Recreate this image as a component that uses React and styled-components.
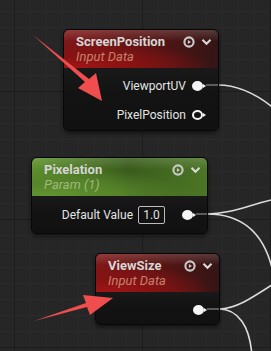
import React from "react";
import styled, { createGlobalStyle } from "styled-components";

const GlobalStyle = createGlobalStyle`
  html, body {
    margin: 0;
    padding: 0;
    background: #262626;
    font-family: Roboto, "Liberation Sans", sans-serif;
  }
`;

const Canvas = styled.div`
  position: relative;
  width: 271px;
  height: 351px;
  overflow: hidden;
  background-color: #262626;
  background-image:
    linear-gradient(to right, #1c1c1c 1px, transparent 1px),
    linear-gradient(to bottom, #1c1c1c 1px, transparent 1px),
    linear-gradient(to right, #2a2a2a 1px, transparent 1px),
    linear-gradient(to bottom, #2a2a2a 1px, transparent 1px);
  background-size: 128px 128px, 128px 128px, 16px 16px, 16px 16px;
  background-position: 14px 91px, 14px 91px, 14px 11px, 14px 11px;
`;

const headers = {
  red: `
    linear-gradient(180deg, rgba(255,255,255,0.16) 0%, rgba(255,255,255,0) 30%),
    radial-gradient(ellipse 85% 75% at 10% 100%, #a01616 0%, #861212 45%, rgba(100,16,16,0) 100%),
    linear-gradient(90deg, #801818 0%, #561414 55%, #341515 100%)
  `,
  green: `
    linear-gradient(180deg, rgba(255,255,255,0.14) 0%, rgba(255,255,255,0) 30%),
    radial-gradient(ellipse 85% 75% at 10% 100%, #629430 0%, #56842a 45%, rgba(60,90,28,0) 100%),
    linear-gradient(90deg, #5e902c 0%, #3a5c1c 55%, #4c7626 100%)
  `,
};

const Node = styled.div`
  position: absolute;
  left: ${(p) => p.$x}px;
  top: ${(p) => p.$y}px;
  width: ${(p) => p.$w}px;
  border-radius: 6px;
  border: 1px solid #070707;
  background: #121312;
  box-shadow: 0 2px 4px rgba(0, 0, 0, 0.55);
  overflow: hidden;
  box-sizing: border-box;
`;

const Header = styled.div`
  height: 38px;
  box-sizing: border-box;
  padding: 4px 6px 3px 12px;
  display: flex;
  align-items: flex-start;
  justify-content: space-between;
  background: ${(p) => headers[p.$tone]};
`;

const Titles = styled.div`
  display: flex;
  flex-direction: column;
  line-height: 15px;
  font-size: 13px;
`;

const Title = styled.span`
  font-weight: 700;
  color: #d6d6d6;
`;

const Subtitle = styled.span`
  font-style: italic;
  color: ${(p) => (p.$tone === "green" ? "#9fb87c" : "#c3826e")};
`;

const Icons = styled.div`
  display: flex;
  align-items: center;
  gap: 6px;
  height: 15px;
`;

const Body = styled.div`
  display: flex;
  flex-direction: column;
  gap: 9px;
  padding: ${(p) => p.$pad};
  background: linear-gradient(180deg, #181918 0%, #121312 40%, #101110 100%);
`;

const Row = styled.div`
  height: 20px;
  display: flex;
  align-items: center;
  justify-content: flex-end;
  padding-right: ${(p) => p.$pr}px;
  font-size: 12px;
  color: #e4e4e4;
`;

const Label = styled.span`
  margin-right: 6px;
`;

const ValueBox = styled.span`
  box-sizing: border-box;
  width: 27px;
  height: 18px;
  border: 1px solid #bdbdbd;
  border-radius: 2px;
  display: flex;
  align-items: center;
  justify-content: center;
  margin-right: 17px;
  margin-left: -1px;
  color: #e0e0e0;
`;

const Pin = styled.span`
  position: relative;
  box-sizing: border-box;
  width: 11px;
  height: 10px;
  border-radius: 50%;
  background: ${(p) => (p.$hollow ? "transparent" : "#f4f4f4")};
  border: 2px solid #f4f4f4;
  &::after {
    content: "";
    position: absolute;
    right: -5px;
    top: 1px;
    border-left: 3px solid #f4f4f4;
    border-top: 2px solid transparent;
    border-bottom: 2px solid transparent;
  }
`;

const Overlay = styled.svg`
  position: absolute;
  left: 0;
  top: 0;
  pointer-events: none;
`;

const HeadIcons = () => (
  <Icons>
    <svg width="12" height="12" viewBox="0 0 12 12">
      <circle cx="6" cy="6" r="4.6" fill="none" stroke="#cacaca" strokeWidth="2.1" />
      <path d="M4.9 3.9 L8 6 L4.9 8.1 Z" fill="#cacaca" />
    </svg>
    <svg width="11" height="8" viewBox="0 0 11 8">
      <path d="M1.5 1.8 L5.5 5.8 L9.5 1.8" fill="none" stroke="#d8d8d8" strokeWidth="2.1" />
    </svg>
  </Icons>
);

const NodeHead = ({ title, subtitle, tone }) => (
  <Header $tone={tone}>
    <Titles>
      <Title>{title}</Title>
      <Subtitle $tone={tone}>{subtitle}</Subtitle>
    </Titles>
    <HeadIcons />
  </Header>
);

const wires = [
  "M218 85 C240 85, 262 96, 285 118",
  "M207 214 C232 214, 250 204, 280 198",
  "M207 214 C238 214, 262 228, 272 268",
  "M219 309 C236 309, 252 298, 278 281",
  "M219 309 C238 309, 250 326, 252 356",
];

const stubs = [
  [206, 85, 218],
  [196, 214, 207],
  [207, 309, 219],
];

const App = () => (
  <>
    <GlobalStyle />
    <Canvas>
      <Overlay width="271" height="351">
        {wires.map((d, i) => (
          <path key={i} d={d} fill="none" stroke="#dcdcdc" strokeWidth="1.6" />
        ))}
      </Overlay>

      <Node $x={63} $y={29} $w={156}>
        <NodeHead title="ScreenPosition" subtitle="Input Data" tone="red" />
        <Body $pad="8px 0 5px 0">
          <Row $pr={15}>
            <Label>ViewportUV</Label>
            <Pin />
          </Row>
          <Row $pr={15}>
            <Label>PixelPosition</Label>
            <Pin $hollow />
          </Row>
        </Body>
      </Node>

      <Node $x={31} $y={157} $w={177}>
        <NodeHead title="Pixelation" subtitle="Param (1)" tone="green" />
        <Body $pad="9px 0 8px 0">
          <Row $pr={14}>
            <Label>Default Value</Label>
            <ValueBox>1.0</ValueBox>
            <Pin />
          </Row>
        </Body>
      </Node>

      <Node $x={95} $y={253} $w={125}>
        <NodeHead title="ViewSize" subtitle="Input Data" tone="red" />
        <Body $pad="8px 0 4px 0">
          <Row $pr={15}>
            <Pin />
          </Row>
        </Body>
      </Node>

      <Overlay width="271" height="351">
        {stubs.map(([x1, y, x2], i) => (
          <line key={i} x1={x1} y1={y} x2={x2} y2={y} stroke="#7a7a7a" strokeWidth="1.4" />
        ))}
        <polygon
          points="33,35 85,82 78,88 102,101 96,73 89,79"
          fill="#f04e4e"
        />
        <polygon
          points="34,321 86,303 83,295 113,298 90,315 87,307"
          fill="#f04e4e"
        />
      </Overlay>
    </Canvas>
  </>
);

export default App;
